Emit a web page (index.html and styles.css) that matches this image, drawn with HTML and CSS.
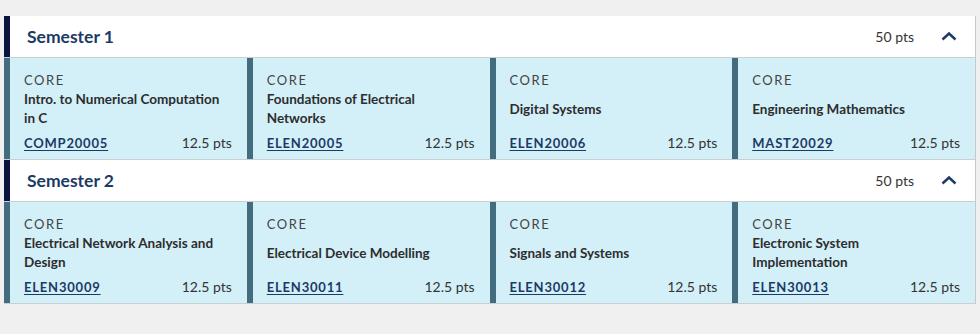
FILE: index.html
```html
<!DOCTYPE html>
<html lang="en">
<head>
<meta charset="utf-8">
<title>Course plan</title>
<link rel="stylesheet" href="styles.css">
</head>
<body>
<div class="plan">
  <section class="semester">
    <header class="sem-head">
      <h2 class="sem-title">Semester 1</h2>
      <span class="sem-pts">50 pts</span>
      <svg class="chev" width="16" height="10" viewBox="0 0 16 10"><polyline points="1.5,8.5 8,2.5 14.5,8.5" fill="none" stroke="#1c3a66" stroke-width="2.4"/></svg>
    </header>
    <div class="cards">
      <div class="card"><div class="kind">Core</div><div class="name">Intro. to Numerical Computation in C</div><div class="foot"><a class="code" href="#">COMP20005</a><span class="pts">12.5 pts</span></div></div>
      <div class="card"><div class="kind">Core</div><div class="name">Foundations of Electrical Networks</div><div class="foot"><a class="code" href="#">ELEN20005</a><span class="pts">12.5 pts</span></div></div>
      <div class="card"><div class="kind">Core</div><div class="name">Digital Systems</div><div class="foot"><a class="code" href="#">ELEN20006</a><span class="pts">12.5 pts</span></div></div>
      <div class="card"><div class="kind">Core</div><div class="name">Engineering Mathematics</div><div class="foot"><a class="code" href="#">MAST20029</a><span class="pts">12.5 pts</span></div></div>
    </div>
  </section>
  <section class="semester">
    <header class="sem-head">
      <h2 class="sem-title">Semester 2</h2>
      <span class="sem-pts">50 pts</span>
      <svg class="chev" width="16" height="10" viewBox="0 0 16 10"><polyline points="1.5,8.5 8,2.5 14.5,8.5" fill="none" stroke="#1c3a66" stroke-width="2.4"/></svg>
    </header>
    <div class="cards">
      <div class="card"><div class="kind">Core</div><div class="name">Electrical Network Analysis and Design</div><div class="foot"><a class="code" href="#">ELEN30009</a><span class="pts">12.5 pts</span></div></div>
      <div class="card"><div class="kind">Core</div><div class="name">Electrical Device Modelling</div><div class="foot"><a class="code" href="#">ELEN30011</a><span class="pts">12.5 pts</span></div></div>
      <div class="card"><div class="kind">Core</div><div class="name">Signals and Systems</div><div class="foot"><a class="code" href="#">ELEN30012</a><span class="pts">12.5 pts</span></div></div>
      <div class="card"><div class="kind">Core</div><div class="name">Electronic System Implementation</div><div class="foot"><a class="code" href="#">ELEN30013</a><span class="pts">12.5 pts</span></div></div>
    </div>
  </section>
</div>
</body>
</html>
```
FILE: styles.css
```css
* { box-sizing: border-box; }
html, body { margin: 0; }
body {
  background: #f0f0f0;
  font-family: Lato, "Liberation Sans", sans-serif;
  color: #333;
}
.plan {
  padding: 16px 4px 0 4px;
}
.semester {
  border-right: 1px solid #c8c8c8;
}
.sem-head {
  display: flex;
  align-items: center;
  height: 41px;
  background: #fff;
  border-left: 6px solid #0a1440;
  padding: 0 18px 0 17px;
}
.sem-title {
  flex: 1;
  margin: 0;
  font-size: 17.5px;
  font-weight: 700;
  color: #1c3a66;
}
.sem-pts {
  font-size: 14px;
  color: #333;
  margin-right: 27px;
}
.chev { display: block; margin-top: -2px; }
.cards {
  display: grid;
  grid-template-columns: repeat(4, 1fr);
  border-top: 1px solid #c8d0d4;
  border-bottom: 1px solid #c8d0d4;
}
.card {
  display: flex;
  flex-direction: column;
  height: 101px;
  background: #d3f0f9;
  border-left: 6px solid #436c7e;
  padding: 12px 15px 6px 14px;
}
.kind {
  font-size: 13px;
  line-height: 20px;
  text-transform: uppercase;
  letter-spacing: 1.6px;
  color: #444;
}
.name {
  flex: 1;
  display: flex;
  align-items: center;
  padding-right: 6px;
  font-size: 13.5px;
  font-weight: 700;
  line-height: 19px;
  color: #2d2d2d;
}
.foot {
  display: flex;
  justify-content: space-between;
  align-items: baseline;
  margin-top: 5px;
  line-height: 20px;
}
.code {
  font-size: 13px;
  font-weight: 700;
  letter-spacing: 0.8px;
  color: #1c3a66;
  text-decoration: underline;
  text-underline-offset: 2px;
}
.pts {
  font-size: 14px;
  color: #333;
}
```
